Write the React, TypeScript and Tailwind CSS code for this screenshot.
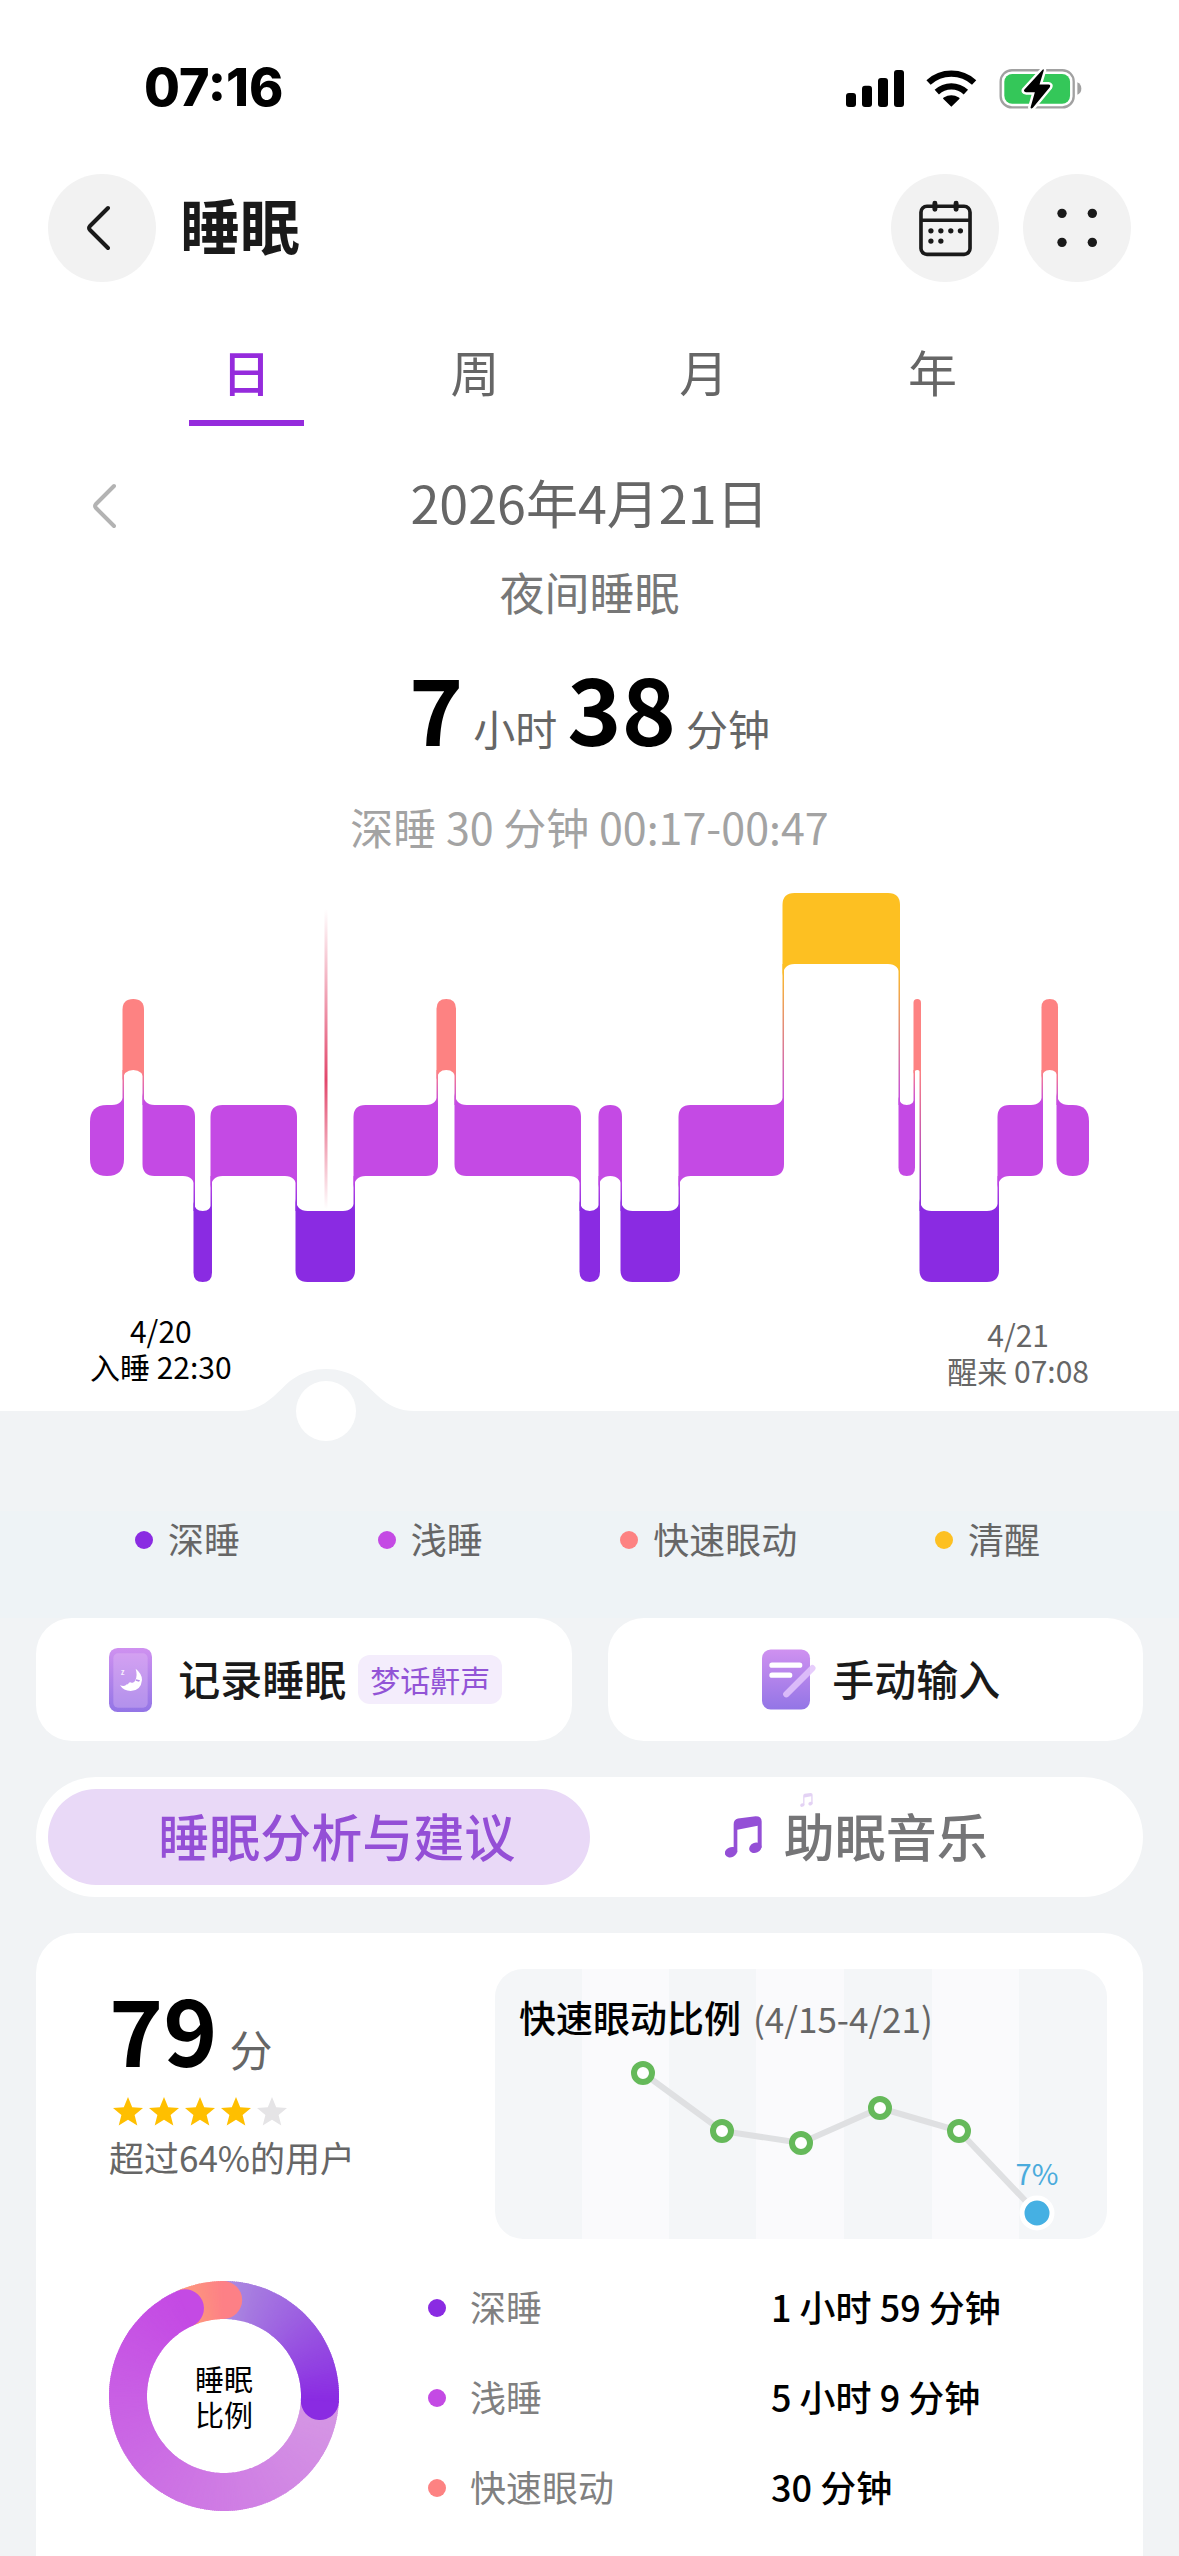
import React from 'react';

const colors = {
  deep: '#8a2be2',
  light: '#c44ae4',
  rem: '#fd8282',
  awake: '#fdc022',
};

type Stage = keyof typeof colors;

// top edge of every stage band in the hypnogram
const bandTop: Record<Stage, number> = { awake: 0, rem: 106, light: 212, deep: 318 };
const bandHeight = 71;

const segments: { stage: Stage; from: number; to: number }[] = [
  { stage: 'light', from: 0, to: 33 },
  { stage: 'rem', from: 33, to: 53 },
  { stage: 'light', from: 53, to: 104 },
  { stage: 'deep', from: 104, to: 121 },
  { stage: 'light', from: 121, to: 206 },
  { stage: 'deep', from: 206, to: 264 },
  { stage: 'light', from: 264, to: 347 },
  { stage: 'rem', from: 347, to: 365 },
  { stage: 'light', from: 365, to: 490 },
  { stage: 'deep', from: 490, to: 509 },
  { stage: 'light', from: 509, to: 531 },
  { stage: 'deep', from: 531, to: 589 },
  { stage: 'light', from: 589, to: 693 },
  { stage: 'awake', from: 693, to: 809 },
  { stage: 'light', from: 809, to: 824 },
  { stage: 'rem', from: 824, to: 830 },
  { stage: 'deep', from: 830, to: 908 },
  { stage: 'light', from: 908, to: 952 },
  { stage: 'rem', from: 952, to: 967 },
  { stage: 'light', from: 967, to: 999 },
];

const legend: { label: string; dot: string }[] = [
  { label: '深睡', dot: 'bg-[#8a2be2]' },
  { label: '浅睡', dot: 'bg-[#c44ae4]' },
  { label: '快速眼动', dot: 'bg-[#fd8282]' },
  { label: '清醒', dot: 'bg-[#fdc022]' },
];

const durations = [
  { label: '深睡', value: '1 小时 59 分钟', dot: 'bg-[#8a2be2]' },
  { label: '浅睡', value: '5 小时 9 分钟', dot: 'bg-[#c44ae4]' },
  { label: '快速眼动', value: '30 分钟', dot: 'bg-[#fd8282]' },
];

const remPoints = [
  [148, 104],
  [227, 162],
  [306, 174],
  [385, 139],
  [464, 162],
];

const SignalIcon = () => (
  <svg viewBox="48 57 174 111" className="w-[58px] h-[37px]">
    <rect x="48" y="126" width="30" height="42" rx="9" />
    <rect x="96" y="104" width="30" height="64" rx="9" />
    <rect x="144" y="81" width="30" height="87" rx="9" />
    <rect x="192" y="57" width="30" height="111" rx="9" />
  </svg>
);

const WifiIcon = () => (
  <svg viewBox="289 56 153 112" className="w-[51px] h-[37px]">
    <g fill="none" stroke="#000" strokeWidth="19">
      <path d="M296 94A102 102 0 0 1 434 94" />
      <path d="M321 123A64 64 0 0 1 409 123" />
    </g>
    <path d="M365 167L341 144Q338 141 342 139Q365 126 388 139Q392 141 389 144Z" />
  </svg>
);

const BatteryIcon = () => (
  <svg viewBox="505 48 250 128" className="w-[83px] h-[43px]">
    <rect x="510" y="57" width="220" height="112" rx="34" fill="none" stroke="#a1a1a1" strokeWidth="7" />
    <rect x="521" y="68" width="198" height="90" rx="24" fill="#34c759" />
    <path d="M741 93Q753 98 753 112Q753 126 741 131Z" fill="#a1a1a1" />
    <path
      d="M637 55L581 116Q578 122 586 123L613 123L600 169Q601 175 607 170L658 108Q662 101 654 100L627 100L640 57Q640 52 637 55Z"
      stroke="#fff"
      strokeWidth="15"
      strokeLinejoin="round"
      paintOrder="stroke"
    />
  </svg>
);

const CalendarIcon = () => (
  <svg viewBox="262 447 166 172" className="w-[55px] h-[57px]" fill="#1a1a1a">
    <rect x="271" y="466" width="148" height="145" rx="18" fill="none" stroke="#1a1a1a" strokeWidth="11" />
    <path d="M271 508H419" stroke="#1a1a1a" strokeWidth="11" />
    <path d="M313 457V475M377 457V475" stroke="#1a1a1a" strokeWidth="15" strokeLinecap="round" />
    <circle cx="301" cy="540" r="8" />
    <circle cx="331" cy="540" r="8" />
    <circle cx="361" cy="540" r="8" />
    <circle cx="390" cy="540" r="8" />
    <circle cx="301" cy="571" r="8" />
    <circle cx="331" cy="571" r="8" />
  </svg>
);

const MoreIcon = () => (
  <svg viewBox="678 475 126 126" className="w-[42px] h-[42px]" fill="#1a1a1a">
    <circle cx="696" cy="494" r="14" />
    <circle cx="787" cy="494" r="14" />
    <circle cx="696" cy="581" r="14" />
    <circle cx="787" cy="581" r="14" />
  </svg>
);

const PhoneIcon = () => (
  <svg viewBox="0 0 129 192" className="w-[43px] h-[64px]">
    <defs>
      <linearGradient id="phone" x1="0" y1="0" x2="0" y2="1">
        <stop offset="0" stopColor="#cf91f0" />
        <stop offset="1" stopColor="#9375e6" />
      </linearGradient>
    </defs>
    <rect width="129" height="192" rx="26" fill="url(#phone)" />
    <rect x="13" y="16" width="103" height="163" rx="14" fill="#e4c4f5" fillOpacity=".35" />
    <path d="M80 62Q100 78 99 96Q96 128 65 129Q44 129 33 112Q44 116 50 112Q52 108 57 109Q60 100 68 104Q76 106 79 97Q86 82 80 62Z" fill="#fff" />
    <path d="M81 94L93 97L90 101L80 98Z" fill="#b88fe8" />
    <text x="35" y="80" fontSize="22" fontWeight="700" fill="#fff" fillOpacity=".85">z</text>
  </svg>
);

const NoteIcon = () => (
  <svg viewBox="0 0 162 182" className="w-[54px] h-[61px]">
    <defs>
      <linearGradient id="note" x1="0" y1="0" x2="0" y2="1">
        <stop offset="0" stopColor="#cf91f0" />
        <stop offset="1" stopColor="#9375e6" />
      </linearGradient>
    </defs>
    <rect y="1" width="144" height="180" rx="26" fill="url(#note)" />
    <path d="M30 48H113M30 78H83" stroke="#fff" strokeWidth="16" strokeLinecap="round" />
    <path d="M73 135L151 57" stroke="#e3c4fb" strokeOpacity=".85" strokeWidth="19" strokeLinecap="round" />
  </svg>
);

const MusicIcon = ({ className }: { className: string }) => (
  <svg viewBox="0 0 111 125" className={className} fill="#944fd6">
    <path d="M26 24Q26 10 39 7L92 0Q110 0 110 16V95H98V29L37 41V108H26Z" />
    <ellipse cx="18" cy="108" rx="19" ry="15" transform="rotate(-25 18 108)" />
    <ellipse cx="91" cy="95" rx="19" ry="15" transform="rotate(-25 91 95)" />
  </svg>
);

const Chevron = ({ className }: { className: string }) => (
  <svg viewBox="0 0 24 46" className={className} fill="none" stroke="currentColor" strokeWidth="4" strokeLinecap="round" strokeLinejoin="round">
    <path d="M22 3L4 21Q2 23 4 25L22 43" />
  </svg>
);

const Star = ({ filled }: { filled: boolean }) => (
  <svg viewBox="0 0 30 29" className="w-[30px] h-[29px]" fill={filled ? '#ffbf00' : '#e5e4e6'}>
    <path d="M15 0L19.2 10.2L30 11L21.6 18L24.3 28.6L15 22.8L5.7 28.6L8.4 18L0 11L10.8 10.2Z" />
  </svg>
);

const Hypnogram = () => (
  <svg viewBox="0 0 999 389" className="w-full" role="img" aria-label="睡眠阶段">
    <defs>
      <linearGradient id="cursor" x1="0" y1="0" x2="0" y2="1">
        <stop offset="0" stopColor="#e2476b" stopOpacity="0" />
        <stop offset=".57" stopColor="#e2476b" />
        <stop offset="1" stopColor="#e2476b" stopOpacity="0" />
      </linearGradient>
    </defs>
    {segments.map((s, i) => {
      const prev = segments[i - 1];
      const next = segments[i + 1];
      const top = bandTop[s.stage];
      const bottom = top + bandHeight;
      const x1 = i === 0 ? s.from : s.from - 0.5;
      const x2 = next ? s.to + 1 : s.to;
      const max = prev && next ? 12 : 17;
      const r = Math.min(max, (x2 - x1) / 2);
      const f = Math.min(12, (x2 - x1) / 2);
      const up = (n?: { stage: Stage }) => (n ? bandTop[n.stage] < top : false);
      const down = (n?: { stage: Stage }) => (n ? bandTop[n.stage] > top : false);
      const tl = up(prev) ? 0 : r;
      const bl = down(prev) ? 0 : r;
      const tr = up(next) ? 0 : r;
      const br = down(next) ? 0 : r;
      return (
        <g key={i} fill={colors[s.stage]}>
          <path
            d={`M${x1 + tl} ${top}H${x2 - tr}Q${x2} ${top} ${x2} ${top + tr}V${bottom - br}Q${x2} ${bottom} ${x2 - br} ${bottom}H${x1 + bl}Q${x1} ${bottom} ${x1} ${bottom - bl}V${top + tl}Q${x1} ${top} ${x1 + tl} ${top}Z`}
          />
          {/* flares that run into the thin joins */}
          {up(prev) && <path d={`M${x1} ${top}V${top - f}Q${x1 + 1} ${top} ${x1 + f} ${top}Z`} />}
          {down(prev) && <path d={`M${x1} ${bottom}V${bottom + f}Q${x1 + 1} ${bottom} ${x1 + f} ${bottom}Z`} />}
          {up(next) && <path d={`M${x2} ${top}V${top - f}Q${x2 - 1} ${top} ${x2 - f} ${top}Z`} />}
          {down(next) && <path d={`M${x2} ${bottom}V${bottom + f}Q${x2 - 1} ${bottom} ${x2 - f} ${bottom}Z`} />}
        </g>
      );
    })}
    {segments.slice(1).map((s, i) => {
      const prev = segments[i];
      const [upper, lower] = bandTop[prev.stage] < bandTop[s.stage] ? [prev, s] : [s, prev];
      const y1 = bandTop[upper.stage] + bandHeight;
      const y2 = bandTop[lower.stage];
      return (
        <g key={i}>
          <linearGradient id={`join${i}`} gradientUnits="userSpaceOnUse" x1="0" x2="0" y1={y1} y2={y2}>
            <stop offset="0" stopColor={colors[upper.stage]} />
            <stop offset="1" stopColor={colors[lower.stage]} />
          </linearGradient>
          <rect x={s.from - 0.5} y={y1} width="1.5" height={y2 - y1} fill={`url(#join${i})`} />
        </g>
      );
    })}
    <rect x="234.5" y="16" width="3" height="300" fill="url(#cursor)" />
  </svg>
);

const mix = (a: number[], b: number[], t: number) =>
  `rgb(${a.map((v, i) => Math.round(v + (b[i] - v) * t)).join(',')})`;

const point = (deg: number, radius = 96) => {
  const rad = ((deg - 90) * Math.PI) / 180;
  return [115 + radius * Math.cos(rad), 115 + radius * Math.sin(rad)];
};

const rings = [
  { from: 0, to: 93.5, start: [172, 140, 224], end: [138, 43, 226] },
  { from: 93.5, to: 336.5, start: [213, 152, 228], end: [196, 74, 228] },
  { from: 336.5, to: 360, start: [253, 156, 124], end: [253, 128, 134] },
];

const Donut = () => (
  <svg viewBox="0 0 230 230" className="size-full">
    {rings.map((ring) => {
      const steps = Math.round(ring.to - ring.from);
      const size = (ring.to - ring.from) / steps;
      return Array.from({ length: steps }, (_, i) => {
        const [x1, y1] = point(ring.from + i * size);
        const [x2, y2] = point(ring.from + (i + 1) * size + (i < steps - 1 ? 0.6 : 0));
        return (
          <path
            key={`${ring.from}-${i}`}
            d={`M${x1} ${y1}A96 96 0 0 1 ${x2} ${y2}`}
            fill="none"
            stroke={mix(ring.start, ring.end, (i + 1) / steps)}
            strokeWidth="38"
          />
        );
      });
    })}
    {rings.map((ring) => {
      const [x1, y1] = point(ring.to - 0.5, 115);
      const [x2, y2] = point(ring.to - 0.5, 77);
      return <path key={ring.to} d={`M${x1} ${y1}A19 19 0 0 1 ${x2} ${y2}Z`} fill={mix(ring.start, ring.end, 1)} />;
    })}
  </svg>
);

const RemTrend = () => (
  <div className="relative flex-1 h-[270px] rounded-[28px] overflow-hidden">
    <svg viewBox="0 0 612 270" className="absolute inset-0 size-full" fontFamily="Noto Sans CJK SC">
      <rect width="612" height="270" fill="#f4f6f8" />
      <rect x="87" width="87" height="270" fill="#fafafc" />
      <rect x="261" width="88" height="270" fill="#fafafc" />
      <rect x="437" width="87" height="270" fill="#fafafc" />
      <polyline
        points={[...remPoints, [542, 244]].map((p) => p.join(',')).join(' ')}
        fill="none"
        stroke="#dfe0e2"
        strokeWidth="6"
      />
      {remPoints.map(([x, y]) => (
        <circle key={x} cx={x} cy={y} r="9" fill="#fff" stroke="#65b95a" strokeWidth="6" />
      ))}
      <circle cx="542" cy="244" r="15" fill="#45b0e3" stroke="#fff" strokeWidth="5" />
      <text x="542" y="216" textAnchor="middle" fontSize="29" fill="#4aabdc">7%</text>
    </svg>
    <h2 className="relative flex items-baseline gap-3 pt-6 pl-6 leading-[48px] whitespace-nowrap">
      <span className="text-[37px] font-medium text-black">快速眼动比例</span>
      <span className="text-[35px] text-[#666]">(4/15-4/21)</span>
    </h2>
  </div>
);

export default function App() {
  return (
    <div className="min-h-screen flex flex-col bg-white font-['Noto_Sans_CJK_SC',sans-serif]">
      <div className="flex items-center justify-between pt-[58px] pl-[144px] pr-[97px] h-[118px]">
        <span className="font-['Inter',sans-serif] text-[52px] leading-[60px] font-extrabold">07:16</span>
        <div className="flex items-center gap-[22px]">
          <SignalIcon />
          <WifiIcon />
          <BatteryIcon />
        </div>
      </div>

      <header className="flex items-center gap-6 mt-14 px-12">
        <button aria-label="返回" className="flex items-center justify-center size-[108px] pr-2 rounded-full bg-[#f2f2f2] text-[#1a1a1a]">
          <Chevron className="w-6 h-[46px]" />
        </button>
        <h1 className="flex-1 pb-2 text-[60px] leading-[80px] font-bold text-[#1a1a1a]">睡眠</h1>
        <button aria-label="日历" className="flex items-center justify-center size-[108px] rounded-full bg-[#f2f2f2]">
          <CalendarIcon />
        </button>
        <button aria-label="更多" className="flex items-center justify-center size-[108px] rounded-full bg-[#f2f2f2]">
          <MoreIcon />
        </button>
      </header>

      <nav className="grid grid-cols-4 justify-items-center mt-10 px-[132px] text-[49px] text-[#666]">
        <button className="w-[115px] h-[104px] border-b-6 border-[#952bdc] font-medium text-[#952bdc]">日</button>
        <button className="w-[115px] h-[104px] border-b-6 border-transparent">周</button>
        <button className="w-[115px] h-[104px] border-b-6 border-transparent">月</button>
        <button className="w-[115px] h-[104px] border-b-6 border-transparent">年</button>
      </nav>

      <main className="flex flex-col flex-1">
        <div className="flex items-center justify-between mt-10 px-[92px]">
          <button aria-label="前一天" className="w-6 pt-2 text-[#b3b3b3]">
            <Chevron className="w-6 h-[46px]" />
          </button>
          <p className="text-[52px] leading-[72px] text-[#666]">2026年4月21日</p>
          <div className="w-6" />
        </div>
        <p className="mt-6 text-center text-[45px] leading-[60px] text-[#777]">夜间睡眠</p>
        <p className="flex items-baseline justify-center gap-[10px] mt-6 text-[42px] leading-[60px] text-[#666]">
          <strong className="text-[92px] leading-[120px] font-bold text-black">7</strong>
          小时
          <strong className="text-[92px] leading-[120px] font-bold text-black">38</strong>
          分钟
        </p>
        <p className="mt-[30px] text-center text-[43px] leading-[60px] text-[#a3a3a3]">深睡 30 分钟 00:17-00:47</p>

        <div className="mt-[37px] px-[90px]">
          <Hypnogram />
          <div className="flex justify-between mt-[30px] pb-[23px] text-center text-[30px] leading-9">
            <p className="text-black">
              <span className="block">4/20</span>
              <span className="block">入睡 22:30</span>
            </p>
            <p className="pt-1 text-[#666]">
              <span className="block">4/21</span>
              <span className="block">醒来 07:08</span>
            </p>
          </div>
        </div>

        <div className="relative h-[100px] bg-[#f1f3f5]">
          <svg
            viewBox="0 0 176 73"
            className="absolute -top-[42px] left-[calc(90px+(100%-180px)*0.236)] w-[176px] -translate-x-1/2"
          >
            <path d="M0 43V42C26 42 38 24 52 12C64 3 76 0 88 0C100 0 112 3 124 12C138 24 150 42 176 42V43Z" fill="#f1f3f5" />
            <circle cx="88" cy="42" r="30" fill="#fff" />
          </svg>
        </div>
        <ul className="flex justify-between h-[107px] pl-[135px] pr-[139px] bg-[#eef3f6] text-[36px] leading-[54px] text-[#666]">
          {legend.map((item) => (
            <li key={item.label} className="flex items-center gap-[15px] h-[54px]">
              <span className={`size-[18px] mt-1 rounded-full ${item.dot}`} />
              {item.label}
            </li>
          ))}
        </ul>

        <div className="flex flex-col flex-1 gap-9 px-9 bg-[#f1f3f5]">
          <div className="grid grid-cols-2 gap-9 text-[42px] font-medium text-[#1a1a1a]">
            <button className="flex items-center justify-center h-[123px] pl-1 rounded-[36px] bg-white">
              <PhoneIcon />
              <span className="ml-[26px] mr-3 pb-1">记录睡眠</span>
              <span className="px-3 rounded-xl bg-[#f4edfc] text-[30px] leading-[49px] font-normal text-[#9254d6]">梦话鼾声</span>
            </button>
            <button className="flex items-center justify-center gap-4 h-[123px] pl-3 rounded-[36px] bg-white">
              <NoteIcon />
              <span className="pb-1">手动输入</span>
            </button>
          </div>

          <div className="grid grid-cols-2 h-[120px] p-3 rounded-full bg-white text-[51px] font-medium">
            <button className="pl-9 pb-1 rounded-full bg-[#e9d9f7] text-[#944fd6]">睡眠分析与建议</button>
            <button className="flex items-center justify-center gap-[22px] pr-2 text-[#757577]">
              <MusicIcon className="w-[37px] h-[42px]" />
              <span className="relative pb-1">
                助眠音乐
                <MusicIcon className="absolute left-4 -top-1 w-[13px] h-[14px] opacity-25" />
              </span>
            </button>
          </div>

          <section className="flex-1 pt-9 pl-[73px] pr-9 rounded-t-[40px] bg-white">
            <div className="flex">
              <div className="w-[386px] shrink-0 pt-2">
                <p className="flex items-baseline gap-3 text-[43px] leading-[50px] text-[#666]">
                  <strong className="text-[92px] leading-[100px] font-bold text-black">79</strong>分
                </p>
                <div className="flex gap-[6px] mt-5 pl-1">
                  {[1, 2, 3, 4, 5].map((n) => (
                    <Star key={n} filled={n < 5} />
                  ))}
                </div>
                <p className="mt-[6px] text-[35px] leading-[50px] text-[#666]">超过64%的用户</p>
              </div>
              <RemTrend />
            </div>

            <div className="flex items-center mt-[22px]">
              <div className="relative size-[230px] shrink-0">
                <Donut />
                <p className="absolute inset-0 flex flex-col items-center justify-center text-[29px] leading-9 text-black">
                  <span>睡眠</span>
                  <span>比例</span>
                </p>
              </div>
              <table className="flex-1 ml-[89px] text-left">
                <tbody>
                  {durations.map((row) => (
                    <tr key={row.label} className="h-[90px]">
                      <th scope="row" className="w-[343px] text-[36px] font-normal text-[#808080]">
                        <span className="flex items-center gap-6">
                          <span className={`size-[18px] mt-1 rounded-full ${row.dot}`} />
                          {row.label}
                        </span>
                      </th>
                      <td className="text-[36px] font-medium text-black">{row.value}</td>
                    </tr>
                  ))}
                </tbody>
              </table>
            </div>
          </section>
        </div>
      </main>
    </div>
  );
}
